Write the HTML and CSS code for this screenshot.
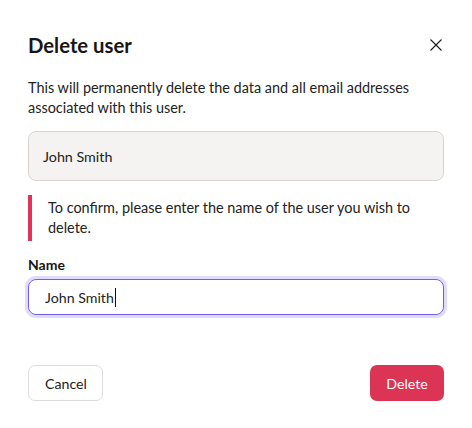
FILE: index.html
```html
<!DOCTYPE html>
<html>
<head>
<meta charset="utf-8">
<link rel="stylesheet" href="styles.css">
</head>
<body>
<div class="dialog">
  <div class="header">
    <h1 class="title">Delete user</h1>
    <button class="close" aria-label="Close">
      <svg width="12" height="12" viewBox="0 0 12 12"><path d="M0.5 0.5L11.5 11.5M11.5 0.5L0.5 11.5" stroke="#1c1c1c" stroke-width="1.1" fill="none"/></svg>
    </button>
  </div>
  <p class="desc">This will permanently delete the data and all email addresses associated with this user.</p>
  <div class="readonly">John Smith</div>
  <div class="notice">To confirm, please enter the name of the user you wish to delete.</div>
  <label class="label">Name</label>
  <div class="input"><span>John Smith</span><span class="caret"></span></div>
  <div class="actions">
    <button class="btn btn-cancel">Cancel</button>
    <button class="btn btn-delete">Delete</button>
  </div>
</div>
</body>
</html>
```
FILE: styles.css
```css
html, body { margin: 0; padding: 0; background: #fff; }
body { font-family: Lato, "Noto Sans", sans-serif; color: #1c1c1c; }
.dialog { padding: 31px 28px 0 28px; display: flex; flex-direction: column; }
.header { display: flex; justify-content: space-between; align-items: center; height: 28px; }
.title { margin: 0; font-size: 20.3px; font-weight: 700; line-height: 28px; color: #161616; }
.close { border: 0; background: none; padding: 0; width: 12px; height: 12px; margin-right: 2px; display: flex; }
.desc { margin: 19px 0 0 0; font-size: 14.45px; line-height: 20px; color: #222; }
.readonly { margin-top: 13px; height: 50px; box-sizing: border-box; border: 1px solid #d8d5d1; border-radius: 8px; background: #f4f3f1; padding: 0 14px; display: flex; align-items: center; font-size: 14.3px; color: #222; }
.notice { margin-top: 14px; border-left: 4px solid #e0325a; padding: 3px 0 3px 16px; font-size: 14.45px; line-height: 20px; color: #222; }
.label { margin-top: 14px; font-size: 14px; font-weight: 700; line-height: 20px; color: #161616; }
.input { margin-top: 4px; height: 36px; box-sizing: border-box; border: 1px solid #6d5cf5; border-radius: 8px; box-shadow: 0 0 0 3px #e1dcfd; padding: 0 16px; display: flex; align-items: center; font-size: 14.2px; color: #222; }
.caret { display: inline-block; width: 1px; height: 19px; background: #111; margin-left: 1px; }
.actions { margin-top: 50px; display: flex; justify-content: space-between; }
.btn { height: 36px; border-radius: 7px; font-family: inherit; font-size: 14.2px; padding: 0 16px; }
.btn-cancel { background: #fff; border: 1px solid #dedcd9; color: #1c1c1c; width: 75px; }
.btn-delete { background: #dc3454; border: 0; color: #fff; width: 74px; }
```
